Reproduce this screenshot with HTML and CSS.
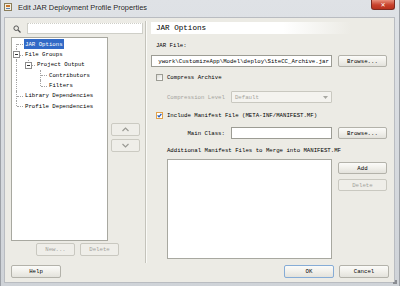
FILE: index.html
```html
<!DOCTYPE html>
<html lang="en">
<head>
  <meta charset="UTF-8" />
  <title>Edit JAR Deployment Profile Properties</title>
  <link rel="stylesheet" href="styles.css">
</head>
<body>
  <div class="window">
    <div class="titlebar">
      <svg class="app-icon" width="8" height="8" viewBox="0 0 8 8">
        <rect x="0.5" y="0.5" width="7" height="7" fill="#f4efe0" stroke="#8a7d5a"/>
        <rect x="2" y="2" width="4" height="2" fill="#c9752a"/>
        <rect x="2" y="5" width="4" height="1" fill="#5a7fb0"/>
      </svg>
      <span class="title">Edit JAR Deployment Profile Properties</span>
      <div class="close">&#x2715;</div>
    </div>

    <div class="client">
      <div class="main">
        <!-- Navigator -->
        <div class="left">
          <div class="search">
            <svg class="mag" width="8" height="8" viewBox="0 0 8 8">
              <circle cx="3.2" cy="3.2" r="2.3" fill="none" stroke="#555" stroke-width="1"/>
              <line x1="5" y1="5" x2="7.5" y2="7.5" stroke="#555" stroke-width="1.2"/>
            </svg>
            <div class="search-field"></div>
          </div>

          <div class="tree-row">
            <div class="tree">
              <div class="node">
                <span class="g first"></span><span class="label selected">JAR Options</span>
              </div>
              <div class="node">
                <span class="g tee"><i class="box"></i></span><span class="label">File Groups</span>
              </div>
              <div class="node">
                <span class="g pass"></span><span class="g last"><i class="box"></i></span><span class="label">Project Output</span>
              </div>
              <div class="node">
                <span class="g pass"></span><span class="g"></span><span class="g tee"></span><span class="label">Contributors</span>
              </div>
              <div class="node">
                <span class="g pass"></span><span class="g"></span><span class="g last"></span><span class="label">Filters</span>
              </div>
              <div class="node">
                <span class="g tee"></span><span class="label">Library Dependencies</span>
              </div>
              <div class="node">
                <span class="g last"></span><span class="label">Profile Dependencies</span>
              </div>
            </div>
            <div class="move">
              <button class="btn move-btn">
                <svg width="7" height="5" viewBox="0 0 7 5"><polyline points="0.5,4 3.5,1 6.5,4" fill="none" stroke="#9a9a94" stroke-width="1.2"/></svg>
              </button>
              <button class="btn move-btn">
                <svg width="7" height="5" viewBox="0 0 7 5"><polyline points="0.5,1 3.5,4 6.5,1" fill="none" stroke="#9a9a94" stroke-width="1.2"/></svg>
              </button>
            </div>
          </div>

          <div class="tree-btns">
            <button class="btn small disabled">New...</button>
            <button class="btn small disabled">Delete</button>
          </div>
        </div>

        <div class="separator"></div>

        <!-- Page -->
        <div class="right">
          <div class="page-header">JAR Options</div>

          <div class="caption">JAR File:</div>
          <div class="field-row">
            <div class="field path"><span>ywork\CustomizeApp\Model\deploy\SiteCC_Archive.jar</span></div>
            <button class="btn side">Browse...</button>
          </div>

          <div class="check-row compress">
            <span class="check"></span><span>Compress Archive</span>
          </div>

          <div class="field-row level">
            <span class="row-label disabled-text">Compression Level</span>
            <div class="combo">
              <span>Default</span>
              <svg width="5" height="3" viewBox="0 0 5 3"><polygon points="0,0 5,0 2.5,3" fill="#a8a8a2"/></svg>
            </div>
          </div>

          <div class="check-row manifest">
            <span class="check checked">
              <svg width="5" height="5" viewBox="0 0 5 5"><polyline points="0.6,2.4 2,3.8 4.4,0.8" fill="none" stroke="#2457b8" stroke-width="1.3"/></svg>
            </span>
            <span>Include Manifest File (META-INF/MANIFEST.MF)</span>
          </div>

          <div class="field-row main-class">
            <span class="row-label">Main Class:</span>
            <div class="field short"></div>
            <button class="btn side">Browse...</button>
          </div>

          <div class="caption extra">Additional Manifest Files to Merge into MANIFEST.MF</div>
          <div class="list-row">
            <div class="list"></div>
            <div class="list-btns">
              <button class="btn side">Add</button>
              <button class="btn side disabled">Delete</button>
            </div>
          </div>
        </div>
      </div>

      <div class="footer">
        <button class="btn foot">Help</button>
        <div class="footer-right">
          <button class="btn foot default">OK</button>
          <button class="btn foot">Cancel</button>
        </div>
      </div>
    </div>
    <div class="grip"></div>
  </div>
</body>
</html>
```

FILE: styles.css
```css
* {
  box-sizing: border-box;
}
body {
  margin: 0;
  font-family: 'Liberation Mono', 'DejaVu Sans Mono', monospace;
  font-size: 5.7px;
  color: #000;
  background: #c8ccd2;
}
.window {
  position: relative;
  width: 400px;
  height: 286px;
  background: linear-gradient(#dfe2e6, #cfd3d8);
  border-left: 1px solid #9da1a7;
  border-right: 1px solid #9da1a7;
  overflow: hidden;
}
.titlebar {
  display: flex;
  align-items: flex-start;
  height: 17px;
}
.app-icon {
  margin: 3px 0 0 3px;
}
.title {
  margin: 3px 0 0 6px;
  font-family: 'Liberation Sans', Arial, sans-serif;
  font-size: 7.4px;
  color: #222;
  text-shadow: 0 0 2px #fff;
}
.close {
  margin-left: auto;
  margin-right: 4px;
  width: 24px;
  height: 10px;
  background: linear-gradient(#e8907c, #c8412c 55%, #b8321e);
  border: 1px solid #7d2a20;
  border-top: none;
  border-radius: 0 0 3px 3px;
  color: #fff;
  font-family: 'DejaVu Sans', sans-serif;
  font-size: 6px;
  font-weight: bold;
  line-height: 9px;
  text-align: center;
}
.client {
  margin: 0 4px 0 3px;
  height: 266px;
  background: #ecebe5;
  border: 1px solid #b9bcc1;
}
.main {
  display: flex;
  height: 246px;
}
.left {
  width: 140px;
  padding: 4px 0 0 6px;
}
.search {
  display: flex;
  align-items: center;
  height: 12px;
}
.mag {
  margin: 1px 6px 0 2px;
}
.search-field {
  width: 116px;
  height: 11px;
  background: #fff;
  border: 1px solid #cfcfc8;
  border-top-style: dotted;
}
.tree-row {
  display: flex;
  margin-top: 3px;
}
.tree {
  width: 97px;
  height: 204px;
  padding-top: 1px;
  background: #fff;
  border: 1px solid #a8a8a0;
}
.node {
  display: flex;
  align-items: center;
  height: 10.35px;
}
.g {
  position: relative;
  width: 12px;
  height: 100%;
  flex-shrink: 0;
}
.g.first::before,
.g.tee::before,
.g.pass::before,
.g.last::before {
  content: "";
  position: absolute;
  left: 4px;
  top: 0;
  bottom: 0;
  border-left: 1px dotted #a4a4a4;
}
.g.first::before {
  top: 50%;
}
.g.last::before {
  bottom: 50%;
}
.g.first::after,
.g.tee::after,
.g.last::after {
  content: "";
  position: absolute;
  left: 5px;
  top: 50%;
  width: 6px;
  border-top: 1px dotted #a4a4a4;
}
.box {
  position: absolute;
  left: 1px;
  top: 2px;
  width: 7px;
  height: 7px;
  background: #fff;
  border: 1px solid #8c8c8c;
  z-index: 1;
}
.box::after {
  content: "";
  position: absolute;
  left: 1px;
  top: 2px;
  width: 3px;
  border-top: 1px solid #333;
}
.label {
  padding: 1px 1px;
  line-height: 7px;
  white-space: nowrap;
}
.selected {
  background: #3169c6;
  color: #fff;
  padding: 1.5px 1px;
}
.move {
  display: flex;
  flex-direction: column;
  gap: 3px;
  width: 29px;
  margin-left: 3px;
  padding-top: 86px;
}
.btn {
  font-family: inherit;
  font-size: 5.7px;
  color: #000;
  padding: 0;
  background: linear-gradient(#fbfbf9, #f2f1ec 45%, #e3e2dc);
  border: 1px solid #b3b2aa;
  border-radius: 2px;
  display: flex;
  align-items: center;
  justify-content: center;
}
.btn.disabled {
  color: #a2a19b;
  background: #efeee9;
  border-color: #c9c8c0;
}
.move-btn {
  height: 13px;
  background: #efeee9;
  border-color: #cbcac2;
}
.tree-btns {
  display: flex;
  gap: 5px;
  margin-top: 2px;
  padding-left: 25px;
}
.btn.small {
  width: 39px;
  height: 13px;
}
.separator {
  width: 2px;
  height: 242px;
  margin: 3px 4px 0 1px;
  border-left: 1px solid #c4c3bb;
  border-right: 1px solid #fafaf7;
}
.right {
  width: 245px;
}
.page-header {
  width: 200px;
  height: 12px;
  margin-top: 4px;
  padding-left: 5px;
  background: linear-gradient(to right, #fff 66%, #ecebe5);
  font-size: 7.6px;
  line-height: 12px;
}
.caption {
  margin: 8px 0 0 5px;
  height: 7px;
  line-height: 7px;
}
.field-row {
  display: flex;
  align-items: center;
  gap: 6px;
  margin-top: 6px;
  height: 12px;
}
.field {
  height: 12px;
  background: #fff;
  border: 1px solid #9c9c94;
}
.path {
  width: 181px;
  display: flex;
  justify-content: flex-end;
  align-items: center;
  overflow: hidden;
  white-space: nowrap;
  padding-right: 2px;
}
.btn.side {
  width: 49px;
  height: 12px;
}
.check-row {
  display: flex;
  align-items: center;
  gap: 4px;
  height: 9px;
  padding-left: 5px;
}
.compress {
  margin-top: 6px;
}
.manifest {
  margin-top: 8px;
}
.check {
  width: 7px;
  height: 7px;
  background: linear-gradient(135deg, #dcdcd6, #fff);
  border: 1px solid #9c9c94;
  display: flex;
  align-items: center;
  justify-content: center;
}
.check.checked {
  background: #fff;
  border-color: #e2a24a;
}
.level {
  margin-top: 9px;
}
.row-label {
  width: 74px;
  text-align: right;
  white-space: nowrap;
}
.disabled-text {
  color: #a4a39d;
}
.combo {
  width: 101px;
  height: 12px;
  display: flex;
  align-items: center;
  justify-content: space-between;
  padding: 0 3px 0 3px;
  color: #a4a39d;
  background: #f4f3ef;
  border: 1px solid #c9c8c0;
  border-radius: 1px;
}
.main-class {
  margin-top: 7px;
}
.field.short {
  width: 101px;
}
.extra {
  margin: 8px 0 0 16px;
}
.list-row {
  display: flex;
  gap: 6px;
  margin-top: 5px;
  padding-left: 16px;
}
.list {
  width: 165px;
  height: 100px;
  background: #fff;
  border: 1px solid #a8a8a0;
}
.list-btns {
  display: flex;
  flex-direction: column;
  gap: 5px;
  padding-top: 3px;
}
.footer {
  display: flex;
  justify-content: space-between;
  padding: 1px 5px 0 6px;
}
.footer-right {
  display: flex;
  gap: 5px;
}
.btn.foot {
  width: 50px;
  height: 13px;
}
.btn.default {
  border-color: #86acd6;
}
.grip {
  position: absolute;
  right: 2px;
  bottom: 2px;
  width: 5px;
  height: 5px;
  background: linear-gradient(135deg, transparent 50%, #8a8d92 50%);
}
```
